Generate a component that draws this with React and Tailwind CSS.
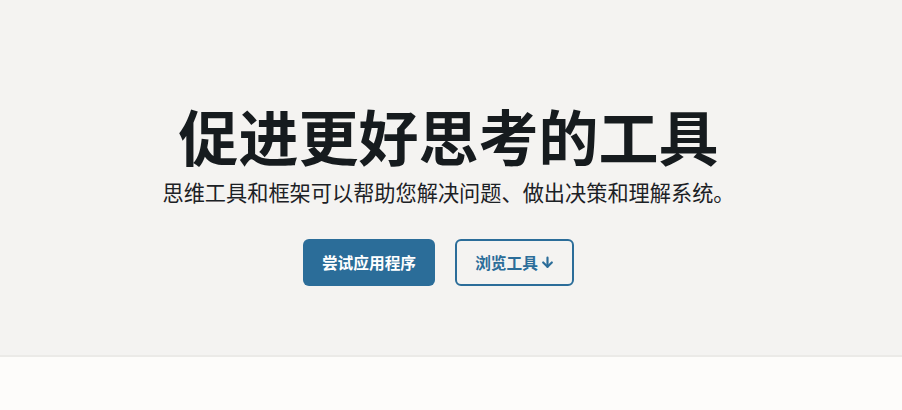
import React from 'react';

export default function App() {
  return (
    <div className="min-h-screen bg-[#fdfcfa]" style={{ fontFamily: '"Noto Sans CJK SC", "Noto Sans", sans-serif' }}>
      {/* Hero */}
      <section className="h-[357px] bg-[#f4f3f1] border-b-2 border-[#ebeae7] flex flex-col items-center pt-[99px] pr-[5px]">
        <h1 className="text-[60px] leading-[72px] font-bold text-[#161b1e]">促进更好思考的工具</h1>
        <p className="mt-[5px] text-[21.2px] leading-[32px] text-[#1c2125]">思维工具和框架可以帮助您解决问题、做出决策和理解系统。</p>
        <div className="mt-[31px] mr-[20px] flex gap-5">
          <button className="h-[47px] w-[132px] rounded-md bg-[#2b6d99] text-white text-[15.7px] font-semibold">尝试应用程序</button>
          <button className="h-[47px] w-[119px] rounded-md border-2 border-[#2b6d99] bg-transparent text-[#2b6d99] text-[15.7px] font-semibold flex items-center justify-center gap-[3px]">
            浏览工具
            <svg width="13" height="13" viewBox="0 0 24 24" fill="none" stroke="currentColor" strokeWidth="4" strokeLinecap="round" strokeLinejoin="round">
              <path d="M12 3v17" />
              <path d="M4 12l8 8 8-8" />
            </svg>
          </button>
        </div>
      </section>
    </div>
  );
}
